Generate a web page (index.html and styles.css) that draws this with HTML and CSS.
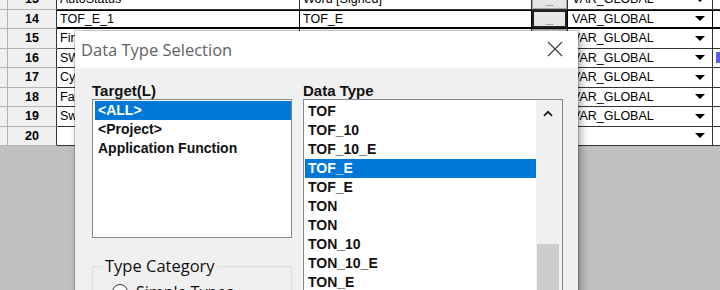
FILE: index.html
```html
<!DOCTYPE html>
<html>
<head>
<meta charset="utf-8">
<title>Data Type Selection</title>
<link rel="stylesheet" href="styles.css">
</head>
<body>
<div class="sheet">
  <div class="row">
    <div class="c strip"></div><div class="c num">13</div><div class="c d">AutoStatus</div><div class="c d">Word [Signed]</div><div class="c btn"><span>...</span></div><div class="c d scope">VAR_GLOBAL<i class="arr"></i></div><div class="c d extra"></div>
  </div>
  <div class="row cur">
    <div class="c strip"></div><div class="c num">14</div><div class="c d">TOF_E_1</div><div class="c d">TOF_E</div><div class="c btn"><span>...</span></div><div class="c d scope">VAR_GLOBAL<i class="arr"></i></div><div class="c d extra"></div>
  </div>
  <div class="row">
    <div class="c strip"></div><div class="c num">15</div><div class="c d">FirstScan</div><div class="c d">BOOL</div><div class="c btn"><span>...</span></div><div class="c d scope">VAR_GLOBAL<i class="arr"></i></div><div class="c d extra"></div>
  </div>
  <div class="row">
    <div class="c strip"></div><div class="c num">16</div><div class="c d">SW_Start</div><div class="c d">BOOL</div><div class="c btn"><span>...</span></div><div class="c d scope">VAR_GLOBAL<i class="arr"></i></div><div class="c d extra"><span class="mark"></span></div>
  </div>
  <div class="row">
    <div class="c strip"></div><div class="c num">17</div><div class="c d">CycleTime</div><div class="c d">TIME</div><div class="c btn"><span>...</span></div><div class="c d scope">VAR_GLOBAL<i class="arr"></i></div><div class="c d extra"></div>
  </div>
  <div class="row">
    <div class="c strip"></div><div class="c num">18</div><div class="c d">FaultReset</div><div class="c d">BOOL</div><div class="c btn"><span>...</span></div><div class="c d scope">VAR_GLOBAL<i class="arr"></i></div><div class="c d extra"></div>
  </div>
  <div class="row">
    <div class="c strip"></div><div class="c num">19</div><div class="c d">SwitchOn</div><div class="c d">BOOL</div><div class="c btn"><span>...</span></div><div class="c d scope">VAR_GLOBAL<i class="arr"></i></div><div class="c d extra"></div>
  </div>
  <div class="row">
    <div class="c strip"></div><div class="c num">20</div><div class="c d"></div><div class="c d"></div><div class="c btn"></div><div class="c d scope"><i class="arr"></i></div><div class="c d extra"></div>
  </div>
</div>

<div class="dialog">
  <div class="titlebar">
    <span class="title">Data Type Selection</span>
    <svg class="close" width="16" height="16" viewBox="0 0 16 16"><path d="M1 1L15 15M15 1L1 15" stroke="#3a3a3a" stroke-width="1.1" fill="none"/></svg>
  </div>
  <div class="dbody">
    <div class="col">
      <div class="lbl">Target(L)</div>
      <div class="list target">
        <div class="item sel">&lt;ALL&gt;</div>
        <div class="item">&lt;Project&gt;</div>
        <div class="item">Application Function</div>
      </div>
      <fieldset class="group">
        <legend>Type Category</legend>
        <div class="radio"><span class="dot"></span>Simple Types</div>
      </fieldset>
    </div>
    <div class="col">
      <div class="lbl">Data Type</div>
      <div class="list dtype">
        <div class="items">
          <div class="item">TOF</div>
          <div class="item">TOF_10</div>
          <div class="item">TOF_10_E</div>
          <div class="item sel">TOF_E</div>
          <div class="item">TOF_E</div>
          <div class="item">TON</div>
          <div class="item">TON</div>
          <div class="item">TON_10</div>
          <div class="item">TON_10_E</div>
          <div class="item">TON_E</div>
        </div>
        <div class="sbar">
          <svg class="up" width="12" height="8" viewBox="0 0 12 8"><path d="M1.5 6.5L6 2L10.5 6.5" stroke="#222" stroke-width="2" fill="none"/></svg>
          <div class="thumb"></div>
        </div>
      </div>
    </div>
  </div>
</div>
</body>
</html>
```

FILE: styles.css
```css
* { box-sizing: border-box; }
html, body { margin: 0; padding: 0; }
body {
  width: 720px;
  height: 290px;
  overflow: hidden;
  position: relative;
  background: #c0c0c0;
  font-family: "Liberation Sans", Arial, sans-serif;
}

/* spreadsheet */
.sheet { margin-top: -10px; width: 760px; }
.row {
  display: grid;
  grid-template-columns: 8px 49px 243px 232px 36px 145px 47px;
  height: 19.5px;
}
.c {
  display: flex;
  align-items: center;
  overflow: hidden;
  white-space: nowrap;
  font-size: 12.5px;
  color: #000;
  background: #fff;
  border-right: 1px solid #333;
  border-bottom: 1px solid #333;
  padding-left: 3px;
}
.strip { background: #f0f0f0; border-color: #b4b4b4; padding: 0; }
.num {
  background: #f0f0f0;
  border-bottom-color: #b4b4b4;
  justify-content: center;
  padding: 0;
  font-weight: bold;
}
.scope { padding-left: 4px; }
.arr {
  margin-left: auto;
  margin-right: 7px;
  width: 0; height: 0;
  border-left: 5px solid transparent;
  border-right: 5px solid transparent;
  border-top: 5px solid #000;
}
.btn {
  background: #e6e6e6;
  justify-content: center;
  align-items: flex-end;
  padding: 0 0 1px;
  font-size: 9px;
  color: #333;
  box-shadow: inset 0 0 0 1px #a8a8a8;
}
.extra { padding-left: 3px; }
.mark { width: 8px; height: 11px; background: #5b5bf0; }

.cur .d { border-color: #000; box-shadow: inset 0 1px 0 #000, inset 0 -1px 0 #000; }
.cur .btn { border-color: #000; box-shadow: inset 0 0 0 2px #222; }

/* dialog */
.dialog {
  position: absolute;
  left: 75px;
  top: 31px;
  width: 503px;
  height: 280px;
  background: #f0f0f0;
  box-shadow: 0 0 0 1px rgba(0,0,0,0.18), 3px 3px 8px rgba(0,0,0,0.35);
}
.titlebar {
  height: 37px;
  background: #fff;
  display: flex;
  align-items: center;
  padding-left: 6px;
  padding-right: 15px;
}
.title {
  font-family: "Open Sans", "Noto Sans", sans-serif;
  font-size: 16.5px;
  color: #626262;
}
.close { margin-left: auto; margin-top: -1px; }

.dbody {
  display: grid;
  grid-template-columns: 200px 260px;
  column-gap: 11px;
  padding: 14px 15px 0 17px;
}
.lbl {
  height: 17px;
  line-height: 17px;
  font-size: 15px;
  font-weight: bold;
  color: #111;
}
.list {
  background: #fff;
  border: 1px solid #828790;
}
.item {
  height: 19px;
  line-height: 19px;
  font-size: 14px;
  font-weight: bold;
  color: #111;
  padding-left: 3px;
  white-space: nowrap;
}
.item.sel { background: #0078d7; color: #fff; }

.target { height: 139px; padding: 1px 0 0 2px; }

.dtype { height: 200px; display: flex; }
.items { flex: 1; padding: 2px 0 0 1px; }
.sbar {
  width: 26px;
  background: #f0f0f0;
  display: flex;
  flex-direction: column;
  align-items: center;
}
.up { margin-top: 10px; margin-left: -3px; }
.thumb {
  margin-top: 127px;
  width: 22px;
  height: 60px;
  margin-left: -3px;
  background: #cdcdcd;
}

.group {
  margin: 18px 0 0;
  padding: 0 0 0 10px;
  border: 1px solid #dcdcdc;
  height: 60px;
}
.group legend {
  padding: 0 2px;
  font-family: "Open Sans", "Noto Sans", sans-serif;
  font-size: 16.5px;
  line-height: 20px;
  color: #111;
}
.radio {
  display: flex;
  align-items: center;
  margin-top: 5px;
  margin-left: 9px;
  font-family: "Open Sans", "Noto Sans", sans-serif;
  font-size: 16px;
  color: #111;
}
.dot {
  width: 16px; height: 16px;
  border: 1px solid #333;
  border-radius: 50%;
  background: #fff;
  margin-right: 8px;
}
```
